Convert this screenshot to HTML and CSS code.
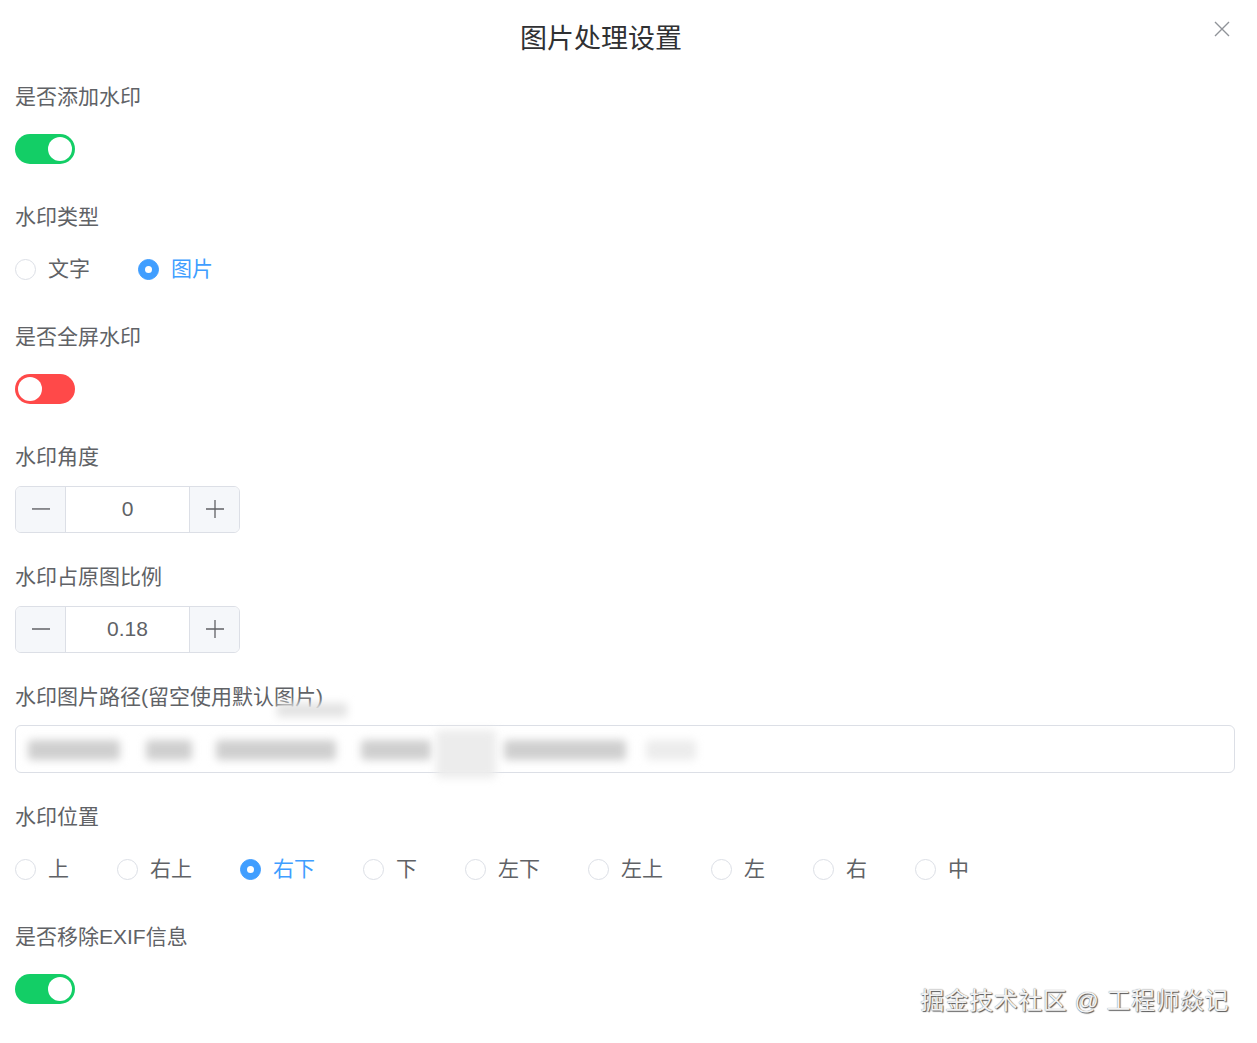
FILE: index.html
```html
<!DOCTYPE html>
<html lang="zh-CN">
<head>
<meta charset="utf-8">
<title>图片处理设置</title>
<link rel="stylesheet" href="styles.css">
</head>
<body>
<div class="dialog">
  <div class="header">
    <div class="title">图片处理设置</div>
    <button class="close" aria-label="关闭">
      <svg width="16" height="16" viewBox="0 0 16 16"><path d="M1 1L15 15M15 1L1 15" stroke="#909399" stroke-width="1.4" fill="none"/></svg>
    </button>
  </div>
  <div class="form">
    <div class="item">
      <div class="label">是否添加水印</div>
      <div class="control"><span class="switch on"><span class="knob"></span></span></div>
    </div>
    <div class="item">
      <div class="label">水印类型</div>
      <div class="control">
        <label class="radio"><span class="dot"></span><span class="rtext">文字</span></label>
        <label class="radio checked"><span class="dot"></span><span class="rtext">图片</span></label>
      </div>
    </div>
    <div class="item">
      <div class="label">是否全屏水印</div>
      <div class="control"><span class="switch off"><span class="knob"></span></span></div>
    </div>
    <div class="item">
      <div class="label">水印角度</div>
      <div class="control">
        <div class="num">
          <span class="nbtn minus"><svg width="18" height="18" viewBox="0 0 18 18"><path d="M0 9H18" stroke="#606266" stroke-width="1.3"/></svg></span>
          <span class="nval">0</span>
          <span class="nbtn plus"><svg width="18" height="18" viewBox="0 0 18 18"><path d="M0 9H18M9 0V18" stroke="#606266" stroke-width="1.3"/></svg></span>
        </div>
      </div>
    </div>
    <div class="item">
      <div class="label">水印占原图比例</div>
      <div class="control">
        <div class="num">
          <span class="nbtn minus"><svg width="18" height="18" viewBox="0 0 18 18"><path d="M0 9H18" stroke="#606266" stroke-width="1.3"/></svg></span>
          <span class="nval">0.18</span>
          <span class="nbtn plus"><svg width="18" height="18" viewBox="0 0 18 18"><path d="M0 9H18M9 0V18" stroke="#606266" stroke-width="1.3"/></svg></span>
        </div>
      </div>
    </div>
    <div class="item">
      <div class="label path-label">水印图片路径(留空使用默认图片)<span class="smear s1"></span></div>
      <div class="control">
        <div class="text-input">
          <span class="blob" style="left:12px;width:92px"></span>
          <span class="blob" style="left:130px;width:46px"></span>
          <span class="blob" style="left:200px;width:120px"></span>
          <span class="blob" style="left:345px;width:70px"></span>
          <span class="blob light" style="left:420px;width:60px;top:4px;height:48px"></span>
          <span class="blob" style="left:488px;width:122px"></span>
          <span class="blob light" style="left:630px;width:50px"></span>
        </div>
      </div>
    </div>
    <div class="item">
      <div class="label">水印位置</div>
      <div class="control">
        <label class="radio"><span class="dot"></span><span class="rtext">上</span></label>
        <label class="radio"><span class="dot"></span><span class="rtext">右上</span></label>
        <label class="radio checked"><span class="dot"></span><span class="rtext">右下</span></label>
        <label class="radio"><span class="dot"></span><span class="rtext">下</span></label>
        <label class="radio"><span class="dot"></span><span class="rtext">左下</span></label>
        <label class="radio"><span class="dot"></span><span class="rtext">左上</span></label>
        <label class="radio"><span class="dot"></span><span class="rtext">左</span></label>
        <label class="radio"><span class="dot"></span><span class="rtext">右</span></label>
        <label class="radio"><span class="dot"></span><span class="rtext">中</span></label>
      </div>
    </div>
    <div class="item">
      <div class="label">是否移除EXIF信息</div>
      <div class="control"><span class="switch on"><span class="knob"></span></span></div>
    </div>
  </div>
  <div class="wm">掘金技术社区 @ 工程师焱记</div>
</div>
</body>
</html>
```

FILE: styles.css
```css
* { box-sizing: border-box; }
html, body { margin: 0; padding: 0; background: #fff; }
body {
  font-family: "Liberation Sans", "Noto Sans CJK SC", sans-serif;
  color: #606266;
  width: 1257px;
  height: 1043px;
  overflow: hidden;
}
.dialog { position: relative; height: 1043px; }
.header {
  position: relative;
  height: 79px;
  padding: 18px 70px 0 15px;
  text-align: center;
}
.title {
  font-size: 27px;
  line-height: 42px;
  color: #303133;
}
.close {
  position: absolute;
  right: 27px;
  top: 21px;
  border: 0;
  background: none;
  padding: 0;
  width: 16px;
  height: 16px;
  display: block;
}
.close svg { display: block; }
.form { padding: 0 22px 0 15px; }
.item { height: 120px; }
.label {
  font-size: 21px;
  line-height: 36px;
  height: 36px;
  margin-bottom: 10px;
  color: #606266;
  white-space: nowrap;
}
.control {
  height: 48px;
  display: flex;
  align-items: center;
}
.switch {
  position: relative;
  width: 60px;
  height: 30px;
  border-radius: 15px;
  display: inline-block;
}
.switch.on { background: #13ce66; }
.switch.off { background: #ff4949; }
.knob {
  position: absolute;
  top: 3px;
  width: 24px;
  height: 24px;
  border-radius: 50%;
  background: #fff;
}
.switch.on .knob { left: 33px; }
.switch.off .knob { left: 3px; }
.radio {
  display: inline-flex;
  align-items: center;
  margin-right: 48px;
  font-size: 21px;
  line-height: 30px;
  color: #606266;
}
.dot {
  width: 21px;
  height: 21px;
  border-radius: 50%;
  border: 1px solid #dcdfe6;
  background: #fff;
  position: relative;
  margin-right: 12px;
  flex: none;
}
.radio.checked .dot { background: #409eff; border-color: #409eff; }
.radio.checked .dot::after {
  content: "";
  position: absolute;
  left: 50%;
  top: 50%;
  width: 7px;
  height: 7px;
  margin: -3.5px 0 0 -3.5px;
  border-radius: 50%;
  background: #fff;
}
.radio.checked .rtext { color: #409eff; }
.num {
  width: 225px;
  height: 47px;
  border: 1px solid #dcdfe6;
  border-radius: 6px;
  display: flex;
  overflow: hidden;
  background: #fff;
}
.nbtn {
  width: 50px;
  background: #f5f7fa;
  display: flex;
  align-items: center;
  justify-content: center;
  flex: none;
}
.nbtn svg { display: block; }
.minus { border-right: 1px solid #dcdfe6; }
.plus { border-left: 1px solid #dcdfe6; }
.nval {
  flex: 1;
  text-align: center;
  font-size: 21px;
  line-height: 44px;
  color: #606266;
}
.path-label { position: relative; }
.smear {
  position: absolute;
  background: #e3e3e3;
  filter: blur(4px);
}
.s1 { left: 262px; top: 24px; width: 70px; height: 14px; }
.text-input {
  position: relative;
  width: 100%;
  height: 48px;
  border: 1px solid #dcdfe6;
  border-radius: 6px;
  background: #fff;
  overflow: visible;
}
.blob {
  position: absolute;
  top: 14px;
  height: 20px;
  background: #cfcfcf;
  filter: blur(4px);
  border-radius: 4px;
}
.blob.light { background: #ececec; }
.wm {
  position: absolute;
  right: 28px;
  top: 984px;
  font-size: 24px;
  line-height: 34px;
  color: #f2f2f2;
  text-shadow: 1px 1px 1px #555, 0 0 1px #777;
  letter-spacing: 0.5px;
}
```
